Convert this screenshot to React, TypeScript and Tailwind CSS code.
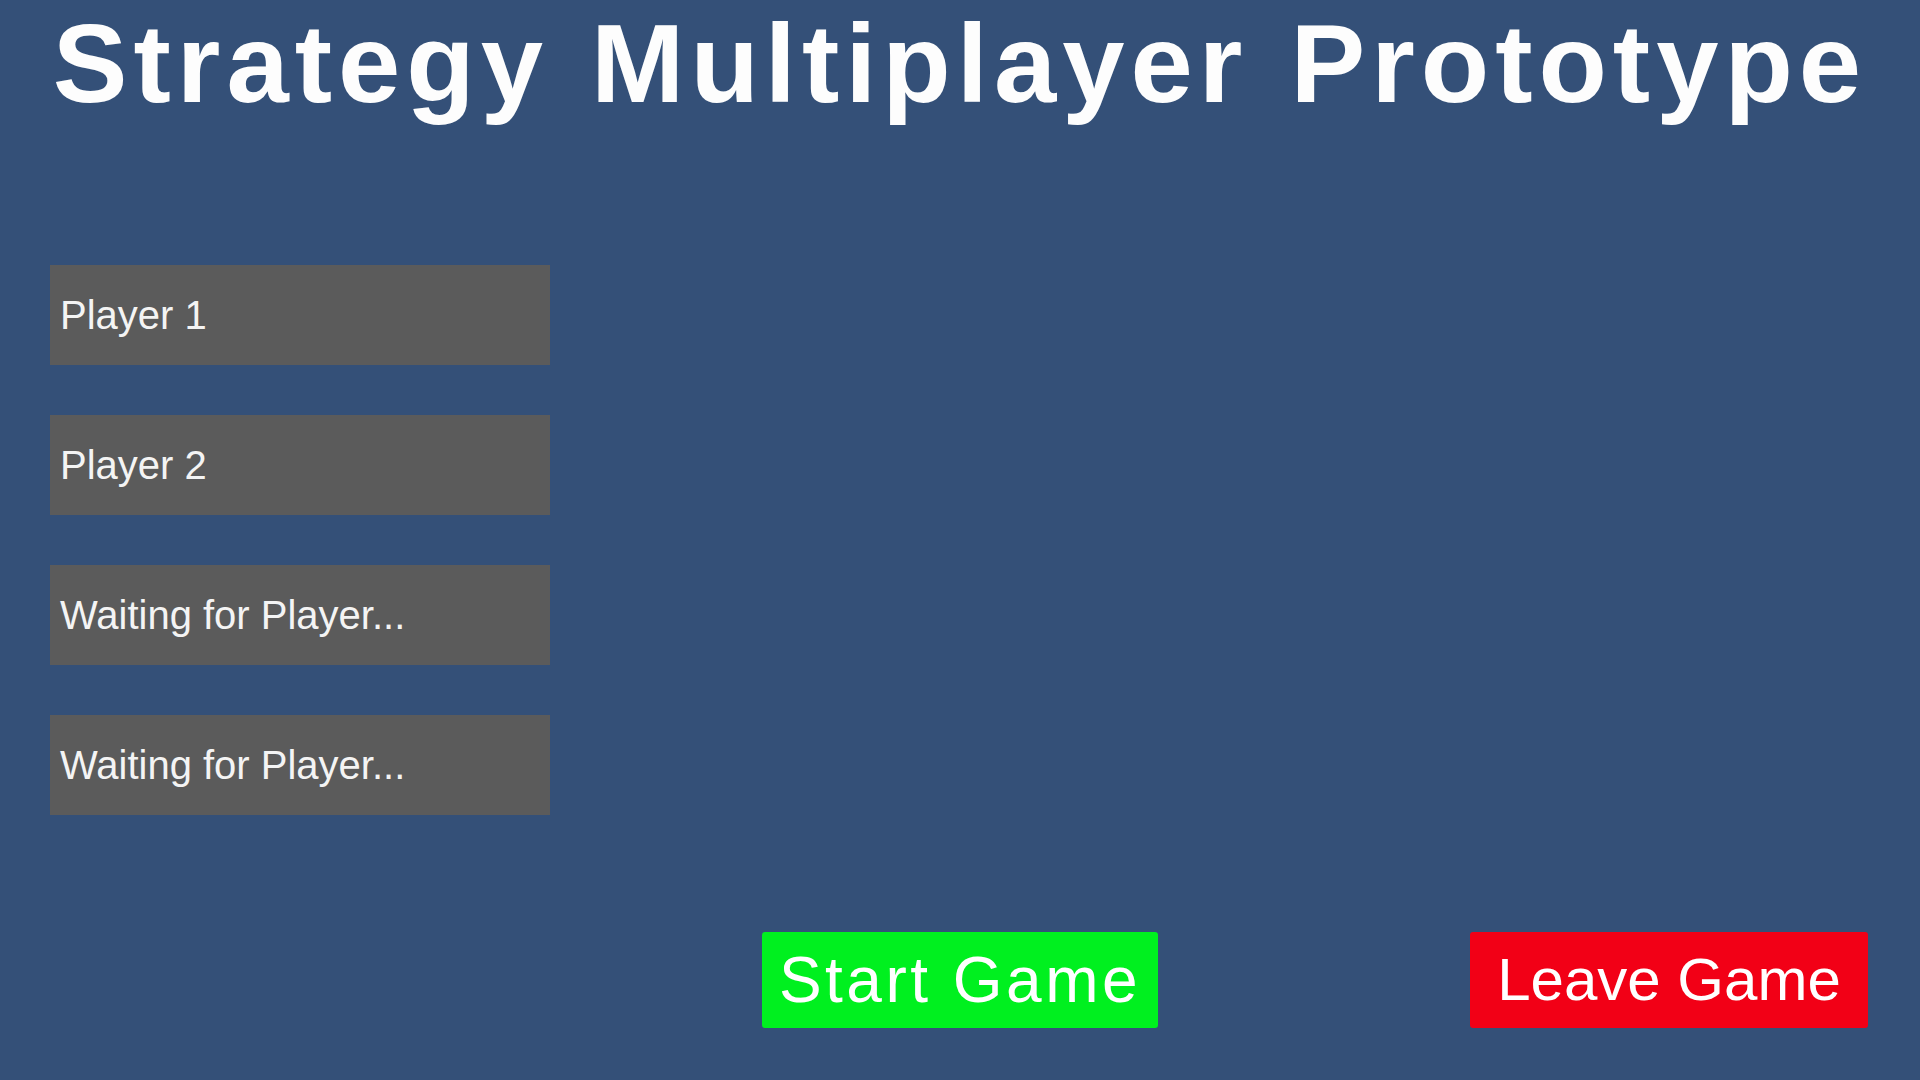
export default function App() {
  const slots = ["Player 1", "Player 2", "Waiting for Player...", "Waiting for Player..."];

  return (
    <div className="h-screen w-full overflow-hidden bg-[#345078] font-['Liberation_Sans',Arial,sans-serif] text-white">
      {/* header */}
      <div className="h-[265px] pt-[8px]">
        <h1 className="text-center text-[112px] font-bold leading-none tracking-[6px] [word-spacing:5px] text-[#fdfdfd]">
          Strategy Multiplayer Prototype
        </h1>
      </div>

      {/* player slots */}
      <div className="ml-[50px] flex w-[500px] flex-col gap-[50px]">
        {slots.map((s, i) => (
          <div key={i} className="flex h-[100px] items-center bg-[#5b5b5b] pl-[10px] text-[40px] text-[#f4f4f4]">
            {s}
          </div>
        ))}
      </div>

      {/* actions */}
      <div className="mt-[117px] grid grid-cols-[1fr_auto_1fr] items-center">
        <div />
        <button className="flex h-[96px] w-[396px] items-center justify-center rounded-[3px] bg-[#00f01f] text-[64px] tracking-[3.5px] text-white">
          Start Game
        </button>
        <div className="flex justify-end pr-[52px]">
          <button className="flex h-[96px] w-[398px] items-center justify-center rounded-[3px] bg-[#f20016] text-[60px] text-white">
            Leave Game
          </button>
        </div>
      </div>
    </div>
  );
}
